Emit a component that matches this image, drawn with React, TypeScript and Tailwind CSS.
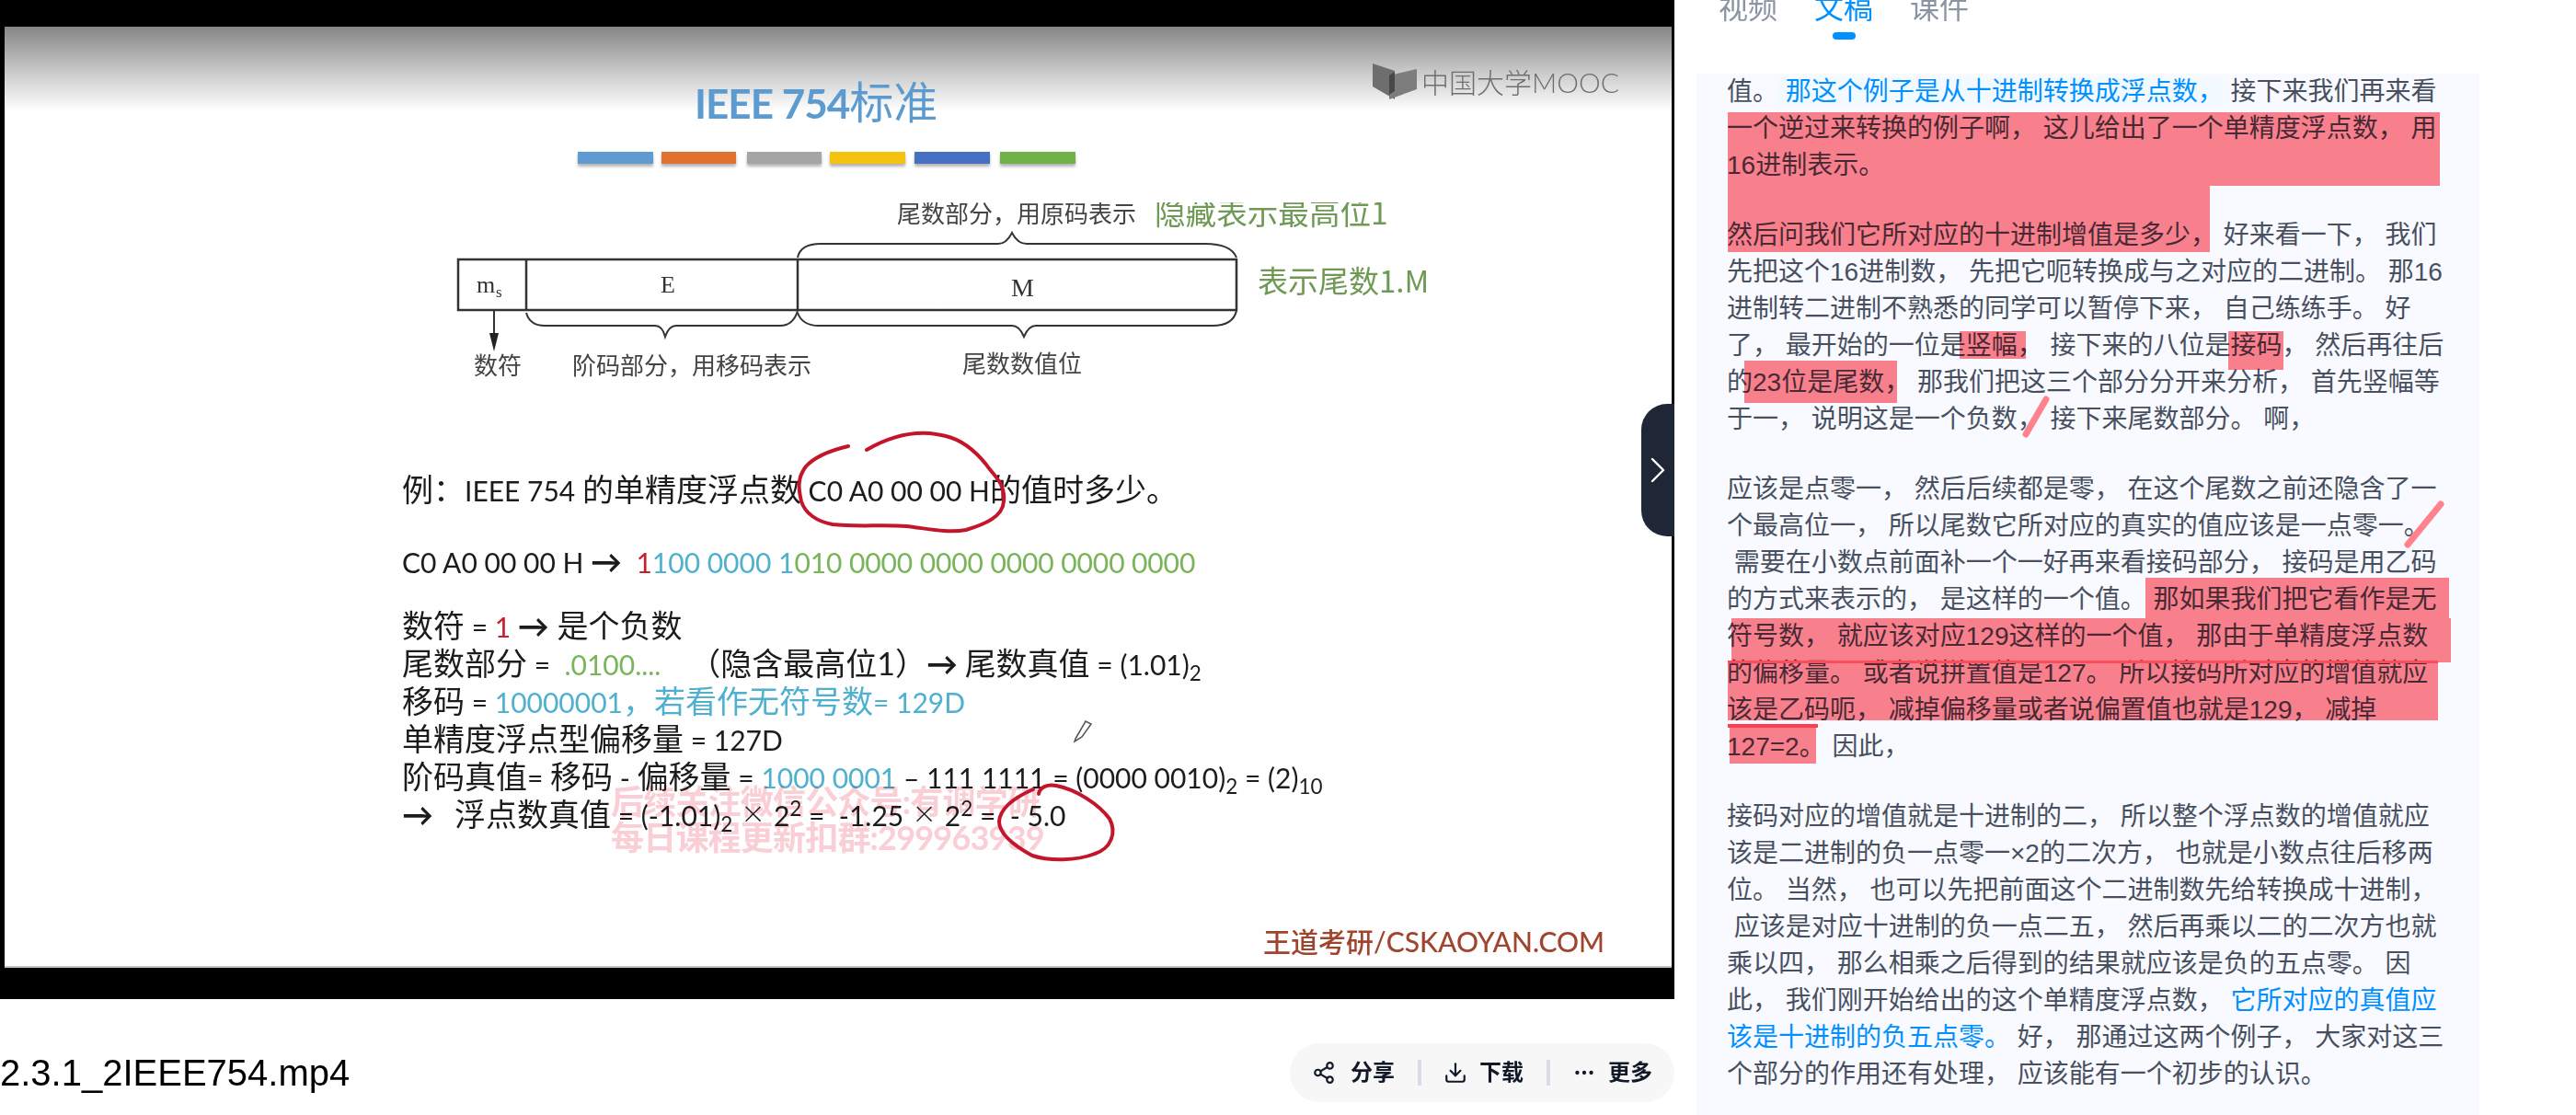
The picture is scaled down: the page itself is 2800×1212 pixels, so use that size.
import type { ReactNode } from "react";
import { ChevronRight, Download, Ellipsis, Share2 } from "lucide-react";

const BAR_CLASS = "h-[13px] shadow-[0_3px_3px_rgba(0,0,0,0.3)]";

// Latin runs on the slide are set smaller than the CJK, the way Calibri sits next to a CJK face
const L = ({ children, className = "" }: { children: ReactNode; className?: string }) => (
  <span className={`text-[30px] ${className}`}>{children}</span>
);

const Arrow = () => <span className="font-bold">→</span>;

const Times = () => <span className="mx-[3px] text-[40px] font-light leading-[30px]">×</span>;

const Diagram = () => (
  <svg viewBox="480 220 1120 200" className="ml-[475px] mt-[42px] h-[200px] w-[1120px] shrink-0">
    <g fill="none" stroke="#333" strokeWidth="2.5">
      <rect x="498" y="282" width="846" height="55" />
      <path d="M572 282V337M867 282V337" />
    </g>
    <g fill="none" stroke="#333" strokeWidth="2">
      <path d="M572 340Q576 354 592 354H712Q720 354 723 366Q727 354 735 354H848Q862 354 867 338" />
      <path d="M867 340Q872 354 890 354H1100Q1108 354 1113 366Q1118 354 1126 354H1318Q1340 354 1344 338" />
      <path d="M867 280Q870 265 892 265H1085Q1094 265 1100 253Q1106 265 1116 265H1310Q1338 265 1344 280" />
      <path d="M537 337V368" />
    </g>
    <path d="M532 362H542L537 382Z" fill="#222" />
    <g fontFamily="'Liberation Serif','Noto Sans CJK SC',serif" fill="#333">
      <text x="518" y="318" fontSize="26">m</text>
      <text x="539" y="323" fontSize="17">s</text>
      <text x="718" y="318" fontSize="26">E</text>
      <text x="1099" y="322" fontSize="28">M</text>
    </g>
    <g fontFamily="'Noto Sans CJK SC',sans-serif" fill="#444" fontSize="26">
      <text x="515" y="407">数符</text>
      <text x="622" y="407">阶码部分，用移码表示</text>
      <text x="1046" y="405">尾数数值位</text>
      <text x="975" y="242">尾数部分，用原码表示</text>
    </g>
    <g fontFamily="'Noto Sans CJK SC',sans-serif" fill="#6f9a55">
      <text x="1255" y="244" fontSize="33.6">隐藏表示最高位1</text>
      <text x="1367" y="318" fontSize="33">表示尾数1.M</text>
    </g>
  </svg>
);

const Slide = () => (
  <div className="relative flex h-[1023px] w-[1812px] flex-col overflow-hidden border-b-2 border-[#c4c4c4] bg-[linear-gradient(#868686_0,#c8c8c8_48px,#ffffff_92px,#fefefe_100%)] font-['Lato','Noto_Sans_CJK_SC',sans-serif]">
    <div className="ml-[750px] mt-[52px] h-[60px] shrink-0 whitespace-pre text-[48px] leading-[60px] text-[#5b9bd0] blur-[0.4px]">
      <span className="text-[44px] font-bold tracking-[-1px]">IEEE 754</span>标准
    </div>
    <div className="ml-[623px] mt-[24px] flex shrink-0">
      <div className={`${BAR_CLASS} w-[82px] bg-[#5f9ad3]`} />
      <div className={`${BAR_CLASS} ml-[9px] w-[81px] bg-[#e2712f]`} />
      <div className={`${BAR_CLASS} ml-[12px] w-[81px] bg-[#a5a5a5]`} />
      <div className={`${BAR_CLASS} ml-[9px] w-[82px] bg-[#f5c20f]`} />
      <div className={`${BAR_CLASS} ml-[10px] w-[82px] bg-[#4670c2]`} />
      <div className={`${BAR_CLASS} ml-[11px] w-[82px] bg-[#72b04a]`} />
    </div>
    <Diagram />
    <div className="ml-[432px] mt-[91px] flex flex-col text-[34px] leading-[41px] text-[#1c1c1c] blur-[0.3px]">
      <div className="h-[41px] whitespace-pre">
        例：<L>IEEE 754 </L>的单精度浮点数<L> C0 A0 00 00 H</L>的值时多少。
      </div>
      <div className="mt-[37px] h-[41px] whitespace-pre">
        <L>C0 A0 00 00 H </L><Arrow />
        <L>{"  "}</L>
        <L className="text-[#c6202f]">1</L>
        <L className="text-[#4fb0cf]">100 0000 1</L>
        <L className="tracking-[-0.1px] text-[#78b558]">010 0000 0000 0000 0000 0000</L>
      </div>
      <div className="mt-[29px] h-[41px] whitespace-pre">
        数符<L> = </L><L className="text-[#c6202f]">1 </L><Arrow /> 是个负数
      </div>
      <div className="h-[41px] whitespace-pre">
        尾数部分<L> =  </L><L className="text-[#78b558]">.0100....</L><L>{"    "}</L>（隐含最高位1）<Arrow /><L> </L>尾数真值<L> = (1.01)<sub>2</sub></L>
      </div>
      <div className="h-[41px] whitespace-pre">
        移码<L> = </L><L className="text-[#4fb0cf]">10000001</L><span className="text-[#4fb0cf]">，若看作无符号数</span><L className="text-[#4fb0cf]">= 129D</L>
      </div>
      <div className="h-[41px] whitespace-pre">
        单精度浮点型偏移量<L> = 127D</L>
      </div>
      <div className="h-[41px] whitespace-pre">
        阶码真值<L>= </L>移码<L> - </L>偏移量<L> = </L><L className="text-[#4fb0cf]">1000 0001</L><L> – 111 1111 = (0000 0010)<sub>2</sub> = (2)<sub>10</sub></L>
      </div>
      <div className="h-[41px] whitespace-pre">
        <Arrow /><L>{"   "}</L>浮点数真值<L> = (-1.01)<sub>2</sub> </L><Times /><L> 2<sup>2</sup> =  -1.25 </L><Times /><L> 2<sup>2</sup> =  - 5.0</L>
      </div>
    </div>

    {/* video overlays */}
    <div className="absolute left-[1487px] top-[40px] flex items-center gap-[5px] text-[#6f6f6f] blur-[0.5px]">
      <svg viewBox="0 0 48 39" className="h-[39px] w-[48px]">
        <path d="M0 0L24 8V39L0 25Z" fill="#6e6e6e" />
        <path d="M18 13L48 6V28L18 39Z" fill="#7d7d7d" />
        <path d="M18 13L24 9V30L18 34Z" fill="#484848" />
      </svg>
      <span className="text-[30px] font-light leading-[36px]">中国大学MOOC</span>
    </div>
    <div className="absolute left-[659px] top-[823px] flex flex-col text-[36px] font-bold leading-[39px] tracking-[-0.8px] text-[#fbcfd6] mix-blend-multiply blur-[0.6px]">
      <span>后续关注微信公众号:有调学研</span>
      <span>每日课程更新扣群:299963939</span>
    </div>
    <div className="absolute left-[1368px] top-[974px] text-[30px] font-medium leading-[40px] text-[#a0452d] blur-[0.3px]">
      王道考研/CSKAOYAN.COM
    </div>
    <svg viewBox="5 29 1812 1023" className="absolute left-0 top-0 h-[1023px] w-[1812px]" fill="none">
      <g stroke="#c4162a" strokeWidth="4" strokeLinecap="round" strokeLinejoin="round">
        <path d="M922 485C905 489 887 495 876 507C866 520 868 532 871 545C875 558 888 567 905 570C930 573 960 570 985 572C1005 574 1030 580 1050 576C1070 570 1090 562 1091 545C1093 525 1080 517 1072 505C1060 490 1045 478 1028 474C1005 468 975 470 942 489" />
        <path d="M1129 863C1130 856 1138 852 1148 854C1170 858 1195 875 1206 890C1214 905 1208 922 1190 928C1170 936 1140 936 1122 930C1100 918 1086 905 1086 893C1087 880 1100 868 1123 858" />
      </g>
      <path d="M1169 803L1180 784L1186 787L1176 801L1168 806Z" stroke="#555" strokeWidth="1.5" fill="#fff" />
    </svg>
  </div>
);

const VideoColumn = () => (
  <div className="relative flex w-[1820px] shrink-0 flex-col">
    <div className="h-[1086px] bg-black pl-[5px] pt-[29px]">
      <Slide />
    </div>
    <div className="flex items-center justify-between pt-[48px]">
      <div className="text-[40px] leading-[64px] text-black">2.3.1_2IEEE754.mp4</div>
      <div className="flex h-[64px] w-[418px] items-center rounded-full bg-[#f7f7f8] pl-[24px] text-[24px] font-semibold text-[#111827]">
        <Share2 className="h-[26px] w-[26px]" strokeWidth={2} />
        <span className="ml-[16px]">分享</span>
        <div className="ml-[25px] h-[28px] w-[4px] bg-[#d9dce6]" />
        <Download className="ml-[24px] h-[26px] w-[26px]" strokeWidth={2} />
        <span className="ml-[13px]">下载</span>
        <div className="ml-[25px] h-[28px] w-[4px] bg-[#d9dce6]" />
        <Ellipsis className="ml-[24px] h-[26px] w-[26px]" strokeWidth={2} />
        <span className="ml-[13px]">更多</span>
      </div>
    </div>
    <div className="absolute right-0 top-[439px] flex h-[144px] w-[36px] items-center justify-center rounded-l-[28px] bg-[#1f2737]">
      <ChevronRight className="h-12 w-12 shrink-0 text-white" strokeWidth={1.2} />
    </div>
  </div>
);

const NotesPanel = () => (
  <div className="relative flex-1 bg-[#f8faff] pl-[33px] pr-[35px] text-[28px] leading-[40px] text-[#48505f]">
    <p className="mb-[36px] whitespace-break-spaces">
      值。<span className="bg-[#f2faff] text-[#0090ff]"> 那这个例子是从十进制转换成浮点数，</span> 接下来我们再来看一个逆过来转换的例子啊， 这儿给出了一个单精度浮点数， 用16进制表示。
    </p>
    <p className="mb-[36px] whitespace-break-spaces">
      然后问我们它所对应的十进制增值是多少， 好来看一下， 我们先把这个16进制数， 先把它呃转换成与之对应的二进制。 那16进制转二进制不熟悉的同学可以暂停下来， 自己练练手。 好了， 最开始的一位是竖幅， 接下来的八位是接码， 然后再往后的23位是尾数， 那我们把这三个部分分开来分析， 首先竖幅等于一， 说明这是一个负数， 接下来尾数部分。 啊，
    </p>
    <p className="mb-[36px] whitespace-break-spaces">
      应该是点零一， 然后后续都是零， 在这个尾数之前还隐含了一个最高位一， 所以尾数它所对应的真实的值应该是一点零一。<br /> 需要在小数点前面补一个一好再来看接码部分， 接码是用乙码的方式来表示的， 是这样的一个值。 那如果我们把它看作是无符号数， 就应该对应129这样的一个值， 那由于单精度浮点数的偏移量。 或者说拼置值是127。 所以接码所对应的增值就应该是乙码呃， 减掉偏移量或者说偏置值也就是129， 减掉127=2。 因此，
    </p>
    <p className="whitespace-break-spaces">
      接码对应的增值就是十进制的二， 所以整个浮点数的增值就应该是二进制的负一点零一×2的二次方， 也就是小数点往后移两位。 当然， 也可以先把前面这个二进制数先给转换成十进制，<br /> 应该是对应十进制的负一点二五， 然后再乘以二的二次方也就乘以四， 那么相乘之后得到的结果就应该是负的五点零。 因此， 我们刚开始给出的这个单精度浮点数， <span className="text-[#0090ff]">它所对应的真值应该是十进制的负五点零。</span> 好， 那通过这两个例子， 大家对这三个部分的作用还有处理， 应该能有一个初步的认识。
    </p>

    {/* user highlights drawn over the transcript */}
    <div className="absolute left-[34px] top-[42px] h-[80px] w-[774px] bg-[#ff828c] mix-blend-multiply" />
    <div className="absolute left-[34px] top-[122px] h-[72px] w-[524px] bg-[#ff828c] mix-blend-multiply" />
    <div className="absolute left-[286px] top-[280px] h-[30px] w-[72px] bg-[#ff828c] mix-blend-multiply" />
    <div className="absolute left-[578px] top-[280px] h-[42px] w-[60px] bg-[#ff828c] mix-blend-multiply" />
    <div className="absolute left-[52px] top-[312px] h-[46px] w-[166px] bg-[#ff828c] mix-blend-multiply" />
    <div className="absolute left-[488px] top-[548px] h-[44px] w-[330px] bg-[#ff828c] mix-blend-multiply" />
    <div className="absolute left-[38px] top-[592px] h-[48px] w-[782px] bg-[#ff828c] mix-blend-multiply" />
    <div className="absolute left-[34px] top-[640px] h-[63px] w-[772px] bg-[#ff828c] mix-blend-multiply" />
    <div className="absolute left-[34px] top-[638px] h-[3px] w-[772px] bg-[#ff4a5a]" />
    <div className="absolute left-[36px] top-[709px] h-[41px] w-[94px] bg-[#ff828c] mix-blend-multiply" />
    <div className="absolute left-[34px] top-[707px] h-[4px] w-[98px] bg-[#ff3c50]" />
    <svg viewBox="1844 80 851 1132" className="absolute left-0 top-0 h-[1132px] w-[851px]" fill="none">
      <path d="M2224 434L2202 472M2653 548L2617 592" stroke="#ff828c" strokeWidth="7" strokeLinecap="round" />
    </svg>
  </div>
);

const App = () => {
  return (
    <div className="flex h-[1212px] w-[2800px] overflow-hidden bg-white font-['Liberation_Sans','Noto_Sans_CJK_SC',sans-serif]">
      <VideoColumn />
      <div className="ml-[24px] mr-[105px] flex flex-1 flex-col">
        <div className="flex h-[80px] shrink-0 items-start gap-[40px] overflow-hidden pl-[24px] text-[32px] leading-[40px] text-[#8b94a3]">
          <div className="-mt-[11px]">视频</div>
          <div className="-mt-[11px] flex flex-col items-center text-[#0090ff]">
            文稿
            <div className="mt-[6px] h-[8px] w-[25px] rounded-full bg-[#0090ff]" />
          </div>
          <div className="-mt-[11px]">课件</div>
        </div>
        <NotesPanel />
      </div>
    </div>
  );
};

export default App;
